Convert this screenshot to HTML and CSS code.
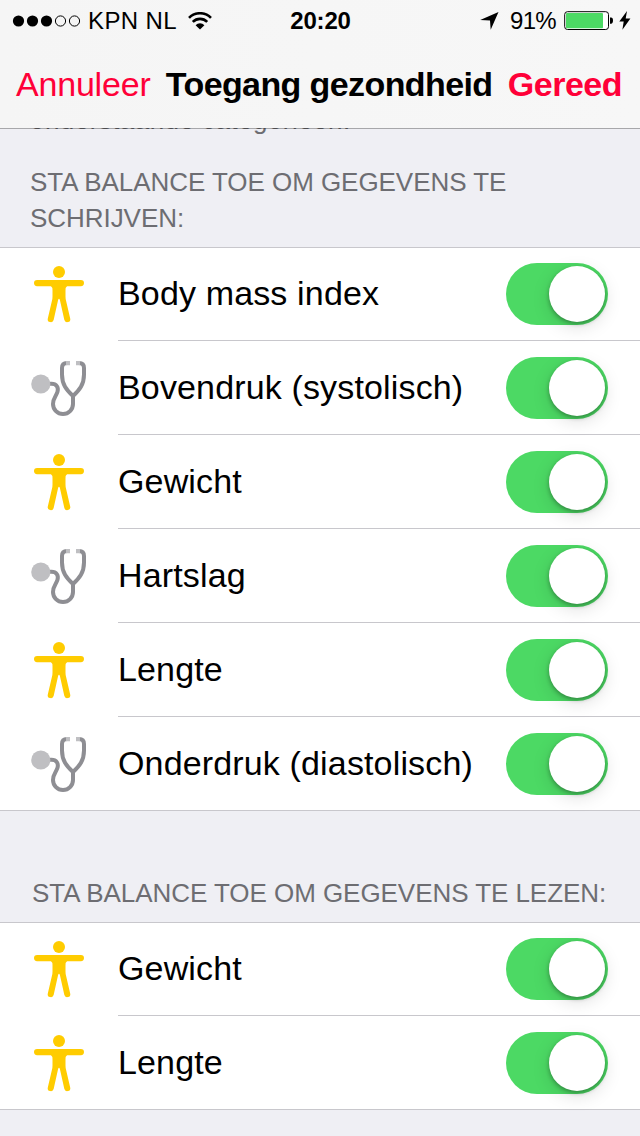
FILE: index.html
```
<!DOCTYPE html>
<html lang="nl">
<head>
    <meta charset="UTF-8">
    <meta name="viewport" content="width=device-width, initial-scale=1.0">
    <title>Toegang gezondheid</title>
    <link rel="stylesheet" href="styles.css">
</head>
<body>
    <!-- Shared icons -->
    <svg class="sprite" width="0" height="0">
        <symbol id="icon-body" viewBox="0 0 60 60">
            <circle cx="30" cy="8" r="6"/>
            <rect x="5" y="16" width="50" height="6.2" rx="3.1"/>
            <path d="M21.5 21.5h17q-2 1.500-2 5v6q0 2 .5 4l4.200 17.900a3 3 0 0 1-5.900 1.400L30.900 36q-.9-2.500-1.800 0l-4.400 19.800a3 3 0 0 1-5.900-1.400L23 36.500q.5-2 .5-4v-6q0-3.500-2-5z"/>
        </symbol>
        <symbol id="icon-steth" viewBox="0 0 60 60">
            <g fill="none" stroke="#8e8e93" stroke-width="4">
                <path d="M20 25.800h2.500c5 0 7.200 3.500 6 8-1.200 4.200-4.500 6.200-4.500 12.200a10 10 0 0 0 20 0V37"/>
                <path d="M38 5c-3.500 0-5 1.800-5 5v6.500c0 10 4.500 15.500 11 21.500 6.500-6 11-11.500 11-21.500V10c0-3.200-1.500-5-5-5"/>
            </g>
            <path fill="#bfbfc2" d="M37 3h4v4.200h-4zM47 3h4v4.200h-4z"/>
            <circle cx="11.800" cy="26" r="9.600" fill="#bfbfc2"/>
        </symbol>
    </svg>

    <header class="header">
        <div class="status">
            <div class="status-left">
                <svg class="signal" width="70" height="12" viewBox="0 0 70 12">
                    <circle cx="6.500" cy="6" r="5.600"/>
                    <circle cx="20.500" cy="6" r="5.600"/>
                    <circle cx="34.500" cy="6" r="5.600"/>
                    <circle cx="48.500" cy="6" r="5.100" fill="none" stroke="#000"/>
                    <circle cx="62.500" cy="6" r="5.100" fill="none" stroke="#000"/>
                </svg>
                <span class="carrier">KPN NL</span>
                <svg class="wifi" width="24" height="18" viewBox="0 0 24 18">
                    <g fill="none" stroke="#000" stroke-width="2.600">
                        <path d="M1 5.800a15.500 15.500 0 0 1 22 0"/>
                        <path d="M4.800 9.900a10.200 10.200 0 0 1 14.400 0"/>
                    </g>
                    <path d="M7.600 13.200a6.200 6.200 0 0 1 8.800 0L12 17.600z"/>
                </svg>
            </div>
            <span class="clock">20:20</span>
            <div class="status-right">
                <svg width="19" height="18" viewBox="0 0 19 18">
                    <path d="M18.500 0L.2 8l9.800.400.7 9.400z"/>
                </svg>
                <span class="percent">91%</span>
                <svg class="battery" width="50" height="20" viewBox="0 0 50 20">
                    <rect x=".7" y=".7" width="43.800" height="17.800" rx="2.800" fill="#fff" stroke="#000"/>
                    <rect x="2" y="2" width="37" height="15.200" rx="1" fill="#4cd964"/>
                    <path d="M46 6.500h1q2 0 2 3.100t-2 3.100h-1z"/>
                </svg>
                <svg width="12" height="19" viewBox="0 0 12 19">
                    <path d="M8 0L.3 10.600h4.400L3.400 18.800 11.400 7.600H6.700z"/>
                </svg>
            </div>
        </div>
        <nav class="nav">
            <a class="nav-link">Annuleer</a>
            <h1 class="title">Toegang gezondheid</h1>
            <a class="nav-link done">Gereed</a>
        </nav>
    </header>

    <main>
        <p class="intro">onderstaande categorieën.</p>

        <h2 class="group-title">STA BALANCE TOE OM GEGEVENS TE SCHRIJVEN:</h2>
        <ul class="list">
            <li class="row">
                <svg class="icon"><use href="#icon-body"/></svg>
                <label class="cell"><span class="name">Body mass index</span><input class="switch" type="checkbox" checked></label>
            </li>
            <li class="row">
                <svg class="icon"><use href="#icon-steth"/></svg>
                <label class="cell"><span class="name">Bovendruk (systolisch)</span><input class="switch" type="checkbox" checked></label>
            </li>
            <li class="row">
                <svg class="icon"><use href="#icon-body"/></svg>
                <label class="cell"><span class="name">Gewicht</span><input class="switch" type="checkbox" checked></label>
            </li>
            <li class="row">
                <svg class="icon"><use href="#icon-steth"/></svg>
                <label class="cell"><span class="name">Hartslag</span><input class="switch" type="checkbox" checked></label>
            </li>
            <li class="row">
                <svg class="icon"><use href="#icon-body"/></svg>
                <label class="cell"><span class="name">Lengte</span><input class="switch" type="checkbox" checked></label>
            </li>
            <li class="row">
                <svg class="icon"><use href="#icon-steth"/></svg>
                <label class="cell"><span class="name">Onderdruk (diastolisch)</span><input class="switch" type="checkbox" checked></label>
            </li>
        </ul>

        <h2 class="group-title read">STA BALANCE TOE OM GEGEVENS TE LEZEN:</h2>
        <ul class="list">
            <li class="row">
                <svg class="icon"><use href="#icon-body"/></svg>
                <label class="cell"><span class="name">Gewicht</span><input class="switch" type="checkbox" checked></label>
            </li>
            <li class="row">
                <svg class="icon"><use href="#icon-body"/></svg>
                <label class="cell"><span class="name">Lengte</span><input class="switch" type="checkbox" checked></label>
            </li>
        </ul>
    </main>
</body>
</html>
```
FILE: styles.css
```
* {
    box-sizing: border-box;
}
body {
    margin: 0;
    min-height: 1136px;
    background-color: #efeff4;
    color: #000;
    font-family: "Liberation Sans", Arial, sans-serif;
}
svg {
    display: block;
    flex: none;
}
.sprite {
    position: absolute;
}

/* Status bar and navigation */
.header {
    position: relative;
    z-index: 1;
    height: 129px;
    background: linear-gradient(to right, #f5f5f5, #f7f7f7) padding-box;
    border-bottom: 1px solid rgba(0, 0, 0, 0.3);
}
.status {
    display: grid;
    grid-template-columns: 1fr auto 1fr;
    align-items: center;
    height: 41px;
    padding: 0 9px 0 12px;
    font-size: 24px;
    line-height: 41px;
}
.status-left,
.status-right {
    display: flex;
    align-items: center;
}
.status-right {
    justify-content: flex-end;
}
.carrier {
    margin: 0 11px 0 6px;
    letter-spacing: 0.4px;
}
.clock {
    margin-right: 2px;
    font-weight: bold;
    letter-spacing: -0.2px;
}
.percent {
    margin: 0 8px 0 11px;
    letter-spacing: -0.7px;
}
.battery {
    margin-right: 5px;
}
.nav {
    display: flex;
    justify-content: space-between;
    height: 87px;
    padding: 0 18px 0 16px;
    font-size: 34px;
    line-height: 87px;
    white-space: nowrap;
}
.nav-link {
    color: #ff0038;
    letter-spacing: -0.2px;
}
.title {
    margin: 0;
    font-size: 34px;
    font-weight: bold;
    letter-spacing: -0.6px;
}
.done {
    font-weight: bold;
    letter-spacing: -0.5px;
}

/* Grouped lists */
.intro {
    margin: -27px 0 0 30px;
    color: #6d6d72;
    font-size: 26px;
    line-height: 36px;
    letter-spacing: 0.45px;
}
.group-title {
    margin: 0;
    padding: 26px 100px 11px 30px;
    color: #6d6d72;
    font-size: 26px;
    font-weight: normal;
    line-height: 36px;
    letter-spacing: -0.05px;
}
.group-title.read {
    padding: 64px 0 11px 32px;
    white-space: nowrap;
}
.list {
    margin: 0;
    padding: 0;
    list-style: none;
    background-color: #fff;
    border-top: 1px solid #c8c7cc;
    border-bottom: 1px solid #c8c7cc;
}
.row {
    display: flex;
    height: 94px;
    padding-left: 29px;
}
.row:first-child {
    height: 93px;
}
.icon {
    width: 60px;
    height: 60px;
    margin: 17px 29px 0 0;
    fill: #ffcc00;
}
.row:first-child .icon {
    margin-top: 16px;
}
.cell {
    flex: 1;
    display: flex;
    align-items: center;
    justify-content: space-between;
    padding: 1px 32px 0 0;
    border-bottom: 1px solid #c8c7cc;
    font-size: 34px;
    line-height: 40px;
    letter-spacing: 0.15px;
}
.name {
    padding-bottom: 2px;
}
.row:first-child .cell {
    padding-top: 0;
}
.row:last-child {
    height: 93px;
}
.row:last-child .cell {
    padding-bottom: 1px;
    border-bottom: none;
}
.switch {
    appearance: none;
    width: 102px;
    height: 62px;
    margin: 0;
    padding: 3px;
    background-color: #4cd964;
    border-radius: 31px;
}
.switch::before {
    content: "";
    display: block;
    width: 56px;
    height: 56px;
    margin-left: auto;
    background-color: #fff;
    border-radius: 50%;
    box-shadow: 0 2px 4px rgba(0, 0, 0, 0.3), 0 5px 18px rgba(0, 0, 0, 0.13);
}
```
